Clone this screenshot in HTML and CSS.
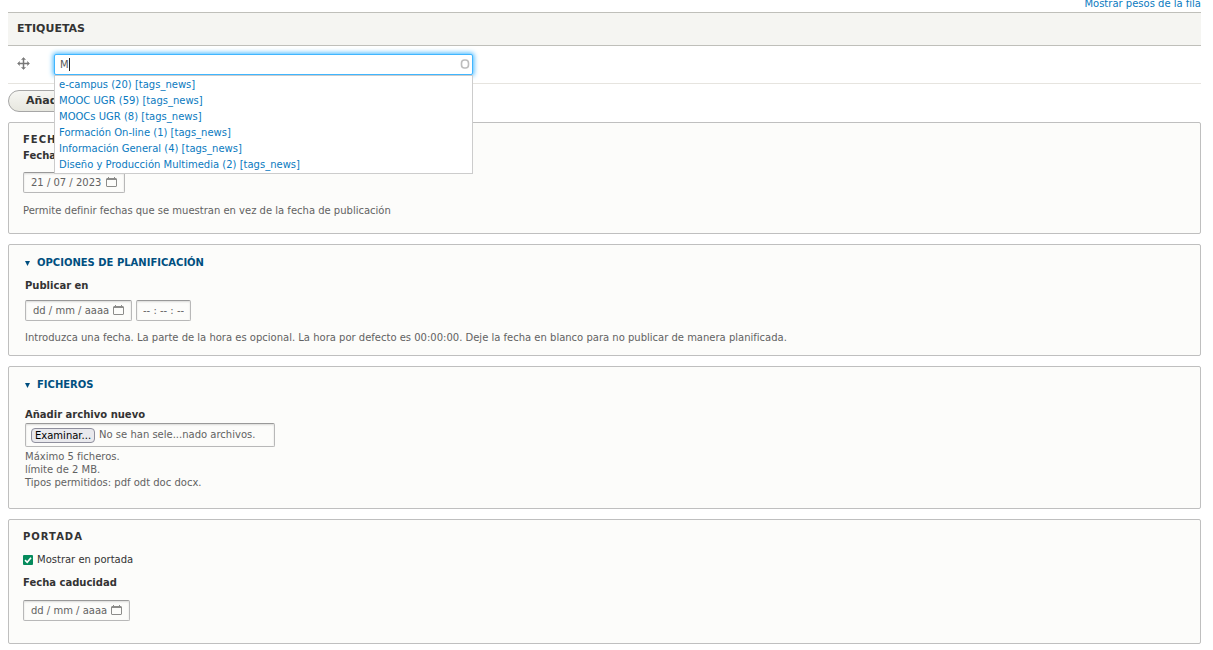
FILE: index.html
```html
<!DOCTYPE html>
<html lang="es">
<head>
<meta charset="utf-8">
<title>Editar contenido</title>
<link rel="stylesheet" href="styles.css">
</head>
<body>
<svg class="sprite" aria-hidden="true">
  <symbol id="calendar" viewBox="0 0 11 11">
    <path d="M2 0h1v1h5V0h1v1h1l1 1v7l-1 1H1L0 9V2l1-1h1zM1 3v6h9V3z" fill="#8c8c8a" fill-rule="evenodd"/>
  </symbol>
</svg>
<form class="page">
  <div class="weights"><a href="#">Mostrar pesos de la fila</a></div>
  <table class="tags">
    <thead><tr><th colspan="2">ETIQUETAS</th></tr></thead>
    <tbody>
      <tr>
        <td class="handle-cell">
          <a class="handle" href="#" aria-label="Arrastrar para reordenar">
            <svg viewBox="0 0 13 13" width="13" height="13"><path d="M6 2.500H4.500L6.500.5l2 2H7V6h3.500V4.500l2 2-2 2V7H7v3.500h1.500l-2 2-2-2H6V7H2.500v1.500l-2-2 2-2V6H6z" fill="#787878" stroke="#787878" stroke-width=".5"/></svg>
          </a>
        </td>
        <td>
          <div class="autocomplete">
            <input class="tag-input" type="text" value="M" aria-label="Etiquetas" autocomplete="off">
            <span class="caret"></span>
            <svg class="throbber" viewBox="0 0 10 10" width="10" height="10"><rect x="1.500" y="1" width="7" height="8" rx="3" fill="none" stroke="#bdbdbd" stroke-width="1.600"/></svg>
            <ul class="menu">
              <li><a href="#">e-campus (20) [tags_news]</a></li>
              <li><a href="#">MOOC UGR (59) [tags_news]</a></li>
              <li><a href="#">MOOCs UGR (8) [tags_news]</a></li>
              <li><a href="#">Formación On-line (1) [tags_news]</a></li>
              <li><a href="#">Información General (4) [tags_news]</a></li>
              <li><a href="#">Diseño y Producción Multimedia (2) [tags_news]</a></li>
            </ul>
          </div>
        </td>
      </tr>
    </tbody>
  </table>
  <button class="add" type="button">Añadir otro</button>

  <fieldset class="panel dates">
    <legend>FECHA</legend>
    <label class="label" for="fecha">Fecha</label>
    <span class="field date"><input id="fecha" type="text" value="21 / 07 / 2023"><svg class="calendar"><use href="#calendar"/></svg></span>
    <p class="help">Permite definir fechas que se muestran en vez de la fecha de publicación</p>
  </fieldset>

  <details class="panel schedule" open>
    <summary><svg class="arrow" viewBox="0 0 5 5"><path d="M0 0h5L2.500 5z" fill="#004f80"/></svg>OPCIONES DE PLANIFICACIÓN</summary>
    <label class="label" for="publicar">Publicar en</label>
    <div class="pair">
      <span class="field date empty"><input id="publicar" type="text" value="dd / mm / aaaa"><svg class="calendar"><use href="#calendar"/></svg></span>
      <span class="field time"><input type="text" value="-- : -- : --" aria-label="Hora"></span>
    </div>
    <p class="help">Introduzca una fecha. La parte de la hora es opcional. La hora por defecto es 00:00:00. Deje la fecha en blanco para no publicar de manera planificada.</p>
  </details>

  <details class="panel files" open>
    <summary><svg class="arrow" viewBox="0 0 5 5"><path d="M0 0h5L2.500 5z" fill="#004f80"/></svg>FICHEROS</summary>
    <label class="label" for="archivo">Añadir archivo nuevo</label>
    <div class="upload">
      <span class="browse">Examinar...</span>
      <span>No se han sele...nado archivos.</span>
      <input id="archivo" type="file">
    </div>
    <p class="help">Máximo 5 ficheros.<br>límite de 2 MB.<br>Tipos permitidos: pdf odt doc docx.</p>
  </details>

  <fieldset class="panel front">
    <legend>PORTADA</legend>
    <div class="check">
      <input id="portada" type="checkbox" checked>
      <label for="portada">Mostrar en portada</label>
      <svg class="tick" viewBox="0 0 10 10"><path d="M2 5.200l2.200 2.100L8 2.700" fill="none" stroke="#fff" stroke-width="1.600"/></svg>
    </div>
    <label class="label" for="caducidad">Fecha caducidad</label>
    <span class="field date empty"><input id="caducidad" type="text" value="dd / mm / aaaa"><svg class="calendar"><use href="#calendar"/></svg></span>
  </fieldset>
</form>
</body>
</html>
```

FILE: styles.css
```css
* { box-sizing: border-box; }

body {
  margin: 0;
  background: #fff;
  color: #333;
  font: 10px/16px "DejaVu Sans", sans-serif;
}

a { color: #0a7ac0; text-decoration: none; }
input, button { font: inherit; color: inherit; }
.sprite { display: none; }
.page { padding: 0 12px 7px 8px; }

.weights { height: 12px; line-height: 7px; text-align: right; }

.tags { width: 100%; border-collapse: separate; border-spacing: 0; }
.tags th {
  height: 34px;
  padding: 0 9px;
  border-top: 1px solid #bfbfba;
  border-bottom: 1px solid #bfbfba;
  background: #f5f5f2;
  font-size: 11px;
  text-align: left;
}
.tags td { height: 38px; padding: 0; border-bottom: 1px solid #e6e4df; }
.tags .handle-cell { width: 46px; padding-left: 9px; }
.handle { display: block; height: 15px; }
.handle svg { display: block; }

.autocomplete { position: relative; width: 419px; }
.tag-input {
  display: block;
  width: 100%;
  height: 21px;
  padding: 0 5px;
  border: 1px solid #40b6ff;
  border-radius: 2px;
  outline: 0;
  background: #fff;
  box-shadow: 0 0 5px 1px #40b6ff;
  color: #595959;
}
.caret { position: absolute; top: 4px; left: 15px; width: 1px; height: 13px; background: #222; }
.throbber { position: absolute; top: 5px; right: 3px; }
.menu {
  position: absolute;
  z-index: 2;
  top: 100%;
  left: 0;
  width: 100%;
  margin: 0;
  padding: 1px 4px 0;
  border: 1px solid #ccc;
  background: #fff;
  list-style: none;
}

.add {
  display: block;
  height: 22px;
  margin: 6px 0 10px;
  padding: 0 17px;
  border: 1px solid #a6a6a6;
  border-radius: 11px;
  background: linear-gradient(#f6f6f3, #e7e7df);
  font-size: 11px;
  font-weight: 700;
}

.panel {
  margin: 0 0 10px;
  padding: 9px 14px 8px;
  border: 1px solid #bfbfbf;
  border-radius: 2px;
  background: #fcfcfa;
}
.panel:last-child { margin-bottom: 0; }
.panel legend { float: left; width: 100%; padding: 0; font-weight: 700; letter-spacing: 1px; }
.panel legend + * { clear: both; }
details.panel { padding: 10px 16px 9px; }
summary { display: flex; align-items: center; gap: 7px; color: #004f80; font-weight: 700; list-style: none; }
.arrow { width: 5px; height: 5px; }
.label { display: block; font-weight: 700; }
.help { margin: 0; color: #626262; line-height: 13px; }

.field {
  display: inline-flex;
  align-items: center;
  height: 21px;
  padding: 0 7px;
  border: 1px solid #b8b8b8;
  border-top-color: #999;
  border-radius: 2px;
  background: #fcfcfa;
  box-shadow: inset 0 1px 2px #0002;
  color: #626262;
  vertical-align: top;
}
.field input { width: 100%; min-width: 0; padding: 0; border: 0; outline: 0; background: none; }
.date { width: 102px; }
.date.empty { width: 107px; }
.time { width: 55px; padding: 0 6px; }
.calendar { flex: none; width: 11px; height: 11px; }
.pair { display: flex; gap: 4px; }

.dates .field { margin-top: 8px; }
.dates .help { margin: 11px 0 8px; }

.schedule .label { margin: 7px 0 6px; }
.schedule .help { margin: 10px 0 2px; }

.files .label { margin-top: 14px; }
.upload {
  position: relative;
  display: flex;
  align-items: center;
  gap: 4px;
  width: 250px;
  height: 24px;
  padding: 0 5px;
  border: 1px solid #b8b8b8;
  border-top-color: #999;
  border-radius: 2px;
  box-shadow: inset 0 1px 2px #0002;
  color: #626262;
  white-space: nowrap;
}
.upload input { position: absolute; inset: 0; width: 100%; opacity: 0; }
.browse {
  padding: 0 3px;
  border: 1px solid #8f8f9d;
  border-radius: 4px;
  background: #e9e9ed;
  color: #000;
  line-height: 13px;
}
.files .help { margin: 3px 0 10px; }

.check { position: relative; display: flex; align-items: center; gap: 4px; padding: 7px 0; }
.check input { appearance: none; width: 10px; height: 10px; margin: 0; border-radius: 1px; background: #058b5c; }
.tick { position: absolute; left: 0; width: 10px; height: 10px; pointer-events: none; }
.front .field { margin: 9px 0 14px; }
```
